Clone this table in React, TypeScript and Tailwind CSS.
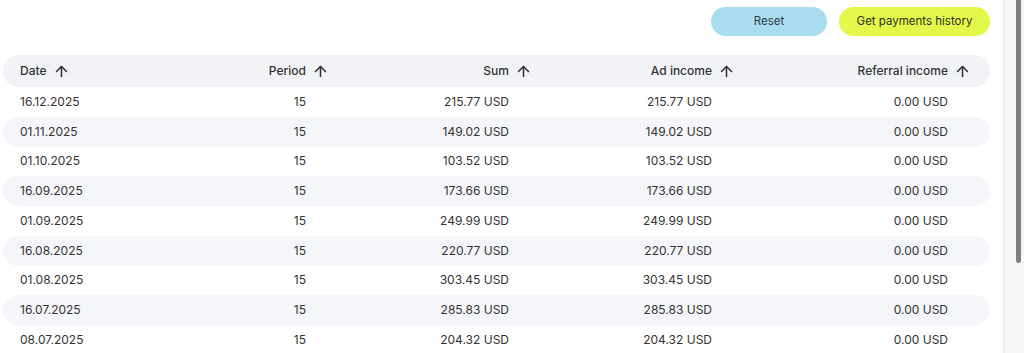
import React from 'react';
import { ArrowUp } from 'lucide-react';

const rows = [
  ['16.12.2025', '15', '215.77 USD', '215.77 USD', '0.00 USD'],
  ['01.11.2025', '15', '149.02 USD', '149.02 USD', '0.00 USD'],
  ['01.10.2025', '15', '103.52 USD', '103.52 USD', '0.00 USD'],
  ['16.09.2025', '15', '173.66 USD', '173.66 USD', '0.00 USD'],
  ['01.09.2025', '15', '249.99 USD', '249.99 USD', '0.00 USD'],
  ['16.08.2025', '15', '220.77 USD', '220.77 USD', '0.00 USD'],
  ['01.08.2025', '15', '303.45 USD', '303.45 USD', '0.00 USD'],
  ['16.07.2025', '15', '285.83 USD', '285.83 USD', '0.00 USD'],
  ['08.07.2025', '15', '204.32 USD', '204.32 USD', '0.00 USD'],
];

const headers = ['Period', 'Sum', 'Ad income', 'Referral income'];

const cols = 'grid grid-cols-[180px_129px_203px_203px_236px] items-center pl-[17px] pr-[19px]';

export default function App() {
  return (
    <div className="flex h-[353px] w-[1024px] overflow-hidden bg-white font-['Inter',sans-serif] text-[12px] text-[#333]">
      <div className="w-[1003px] shrink-0 pl-[3px] pr-[13px] pt-[7px]">
        <div className="flex justify-end gap-3">
          <button className="h-[29px] w-[116px] rounded-full bg-[#a9dcef] text-[11.5px] text-[#2f3b45]">
            Reset
          </button>
          <button className="h-[29px] w-[151px] rounded-full bg-[#e3f84b] text-[11.5px] text-[#2c2f1a]">
            Get payments history
          </button>
        </div>

        <div className="mt-[19px]">
          <div className={`${cols} h-[32px] rounded-full bg-[#f2f3f7] font-medium`}>
            <div className="flex items-center gap-1.5">
              Date
              <ArrowUp size={17} strokeWidth={2.2} />
            </div>
            {headers.map((h) => (
              <div key={h} className="flex items-center justify-end gap-1.5">
                {h}
                <ArrowUp size={17} strokeWidth={2.2} />
              </div>
            ))}
          </div>

          {rows.map((r, i) => (
            <div
              key={r[0]}
              className={`${cols} h-[29.75px] rounded-full ${i % 2 === 1 ? 'bg-[#f5f6f9]' : ''}`}
            >
              <div>{r[0]}</div>
              {r.slice(1).map((v, j) => (
                <div key={j} className="flex items-center justify-end gap-1.5">
                  {v}
                  <span className="w-[17px]" />
                </div>
              ))}
            </div>
          ))}
        </div>
      </div>

      <div className="w-[21px] shrink-0 border-l border-[#e6e6ea] bg-[#f6f6f8]">
        <div className="ml-[12px] h-[263px] w-[5px] rounded-b-full bg-[#7f7f7f]" />
      </div>
    </div>
  );
}
